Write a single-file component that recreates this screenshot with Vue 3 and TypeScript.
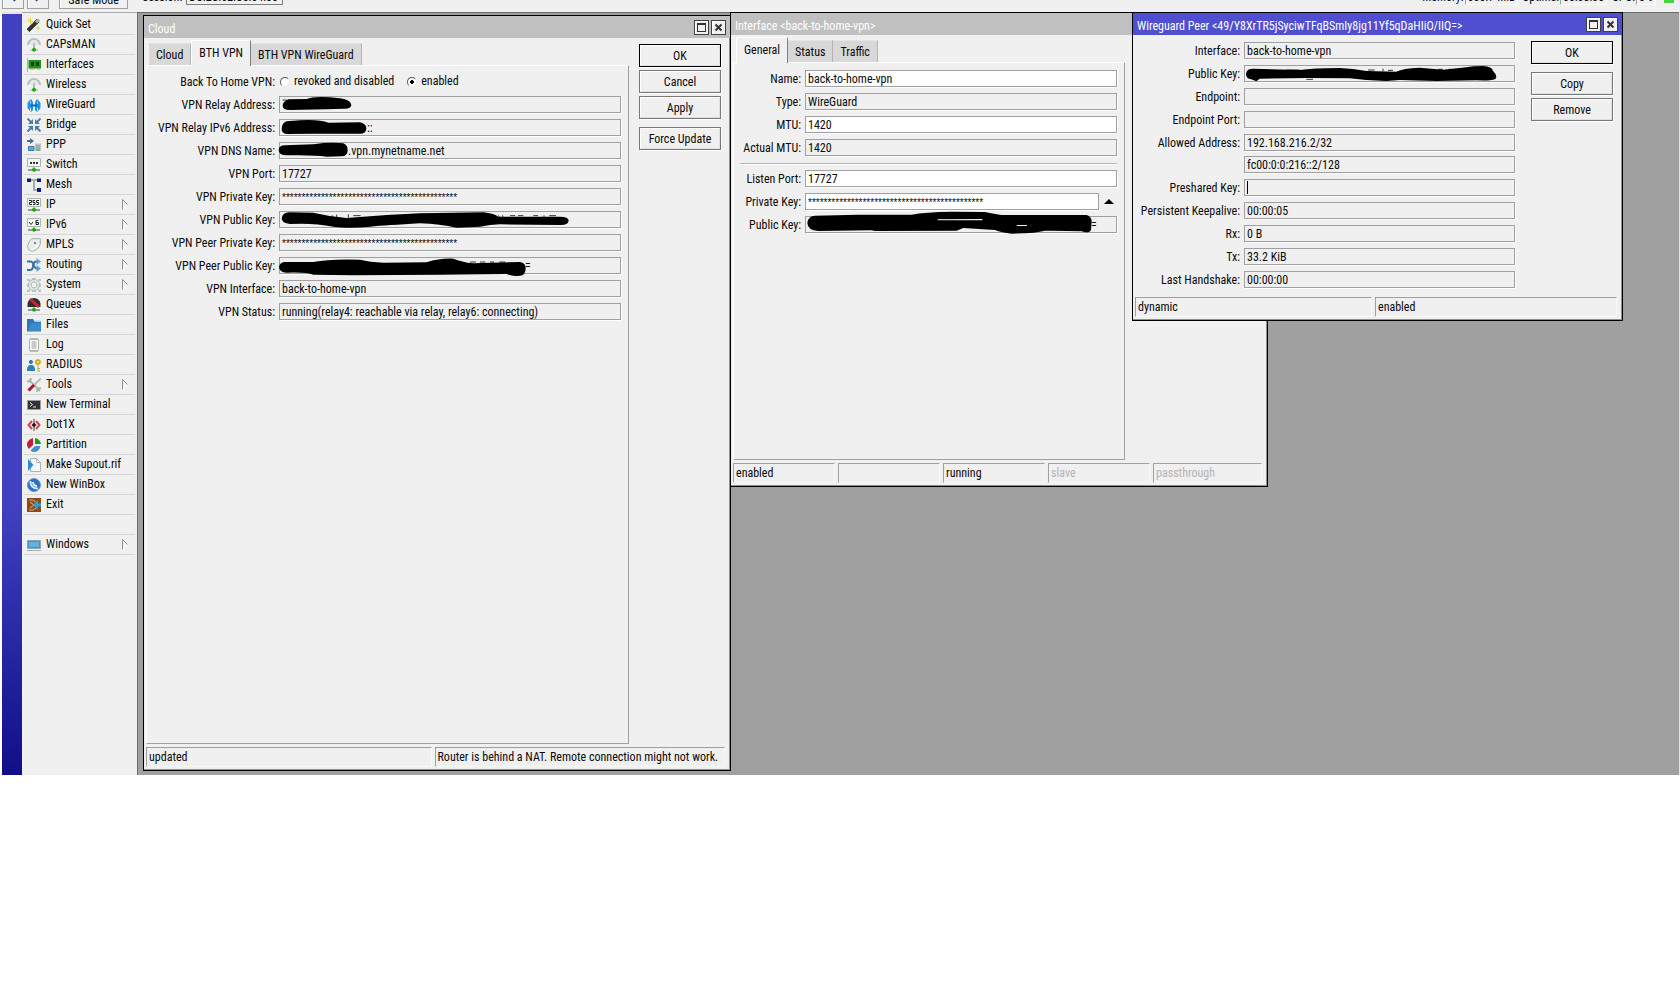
<script setup lang="ts">
import { ref } from 'vue'

type Shape = { d: string; f?: string; s?: string; w?: number }
interface MenuItem { name: string; icon: Shape[]; sub?: boolean }
interface Mask { x: number; y: number; w: number; d: string; marks?: string }
interface Field { id: string; label: string; values: string[]; edit?: boolean; secret?: boolean; mask?: Mask; caret?: boolean; toggle?: boolean; rule?: boolean }

const node: Shape[] = [
  { d: 'M1 12H13', s: '#3a4a3a', w: 1 },
  { d: 'M7 9V12', s: '#8a9a98', w: 1 },
  { d: 'M5 11L7 9.5L9 11V12.500L7 14L5 12.500Z', f: '#1fa80c' },
]
const arc: Shape[] = [
  { d: 'M1 7A6 6 0 0 1 13 7', s: '#b4bfbd', w: 2 },
  { d: 'M3.500 7A3.500 3.500 0 0 1 10.500 7', s: '#dfe6e5', w: 2 },
  { d: 'M7 5V11', s: '#7c8a88', w: 1 },
  { d: 'M3 12H11', s: '#a9b4b2', w: 1 },
  { d: 'M5 11L7 9.500L9 11V12.500L7 14L5 12.500Z', f: '#1fa80c' },
]
const card: Shape[] = [{ d: 'M0.500 0.500H13.500V8.500H0.500Z', f: '#f7f9f9', s: '#aab4b2', w: 1 }]

const menu: MenuItem[] = [
  { name: 'Quick Set', icon: [
    { d: 'M1 12.500L11 2.500', s: '#30302f', w: 4 },
    { d: 'M9 4.500L12 1.500', s: '#a9adad', w: 3 },
    { d: 'M3.500 0V6M0.500 3H6.500M1 0.800L6 5.500M11 8V12M9 10H13', s: '#e8dc2a', w: 1 },
  ] },
  { name: 'CAPsMAN', icon: arc },
  { name: 'Interfaces', icon: [
    { d: 'M0.500 0V14', s: '#a5b1ae', w: 1 },
    { d: 'M1.500 2H14V10.500H1.500Z', f: '#1d9312' },
    { d: 'M4 4H7V8H4ZM9 4H12V8H9Z', f: '#173b17' },
    { d: 'M3 11H8M10 11H13', s: '#c09a40', w: 1 },
  ] },
  { name: 'Wireless', icon: arc },
  { name: 'WireGuard', icon: [
    { d: 'M4 1L6 4V12L4 14L2 12L0.500 10V5L2 3Z', f: '#1d93e4' },
    { d: 'M10 1L8 4V12L10 14L12 12L13.500 10V5L12 3Z', f: '#1d93e4' },
    { d: 'M4 7.500H10', s: '#0b62ae', w: 2 },
    { d: 'M3.500 3V6M10.500 3V6', s: '#7fd0ff', w: 1 },
    { d: 'M3.500 10V13M10.500 10V13', s: '#f0f0f0', w: 1 },
  ] },
  { name: 'Bridge', icon: [
    { d: 'M0.500 0.500L4.500 4.500M13.500 0.500L9.500 4.500M0.500 13.500L4.500 9.500M13.500 13.500L9.500 9.500', s: '#4f7ca3', w: 2 },
    { d: 'M6 1V6H1ZM8 1V6H13ZM6 13V8H1ZM8 13V8H13Z', f: '#4f7ca3' },
  ] },
  { name: 'PPP', icon: [
    { d: 'M0 3H4', s: '#42719a', w: 2 },
    { d: 'M3 0L7 3L3 6Z', f: '#42719a' },
    { d: 'M1.500 8.500H7V12.500H1.500Z', f: '#5ca8e0', s: '#3d78a8', w: 1 },
    { d: 'M8 5.500H14V13H8Z', f: '#bcc5c3' },
    { d: 'M9 8H13M9 10H13', s: '#8a9694', w: 1 },
    { d: 'M9 12H13', s: '#33b020', w: 1 },
  ] },
  { name: 'Switch', icon: [...card, { d: 'M3 4H5V6H3ZM6 4H8V6H6ZM9 4H11V6H9Z', f: '#333' }, ...node] },
  { name: 'Mesh', icon: [
    { d: 'M2 2H12M7 2V12H12', s: '#9fb0ae', w: 2 },
    { d: 'M0 0.500H4V4H0ZM10 0.500H14V4H10ZM10 10H14V14H10Z', f: '#101a80' },
  ] },
  { name: 'IP', sub: true, icon: [...card, { d: 'M2 2.500H4.500V4.500H2.500V6.500H5M8 2.500H6V4.500H8V6.500H6M12 2.500H9.500V4.500H11.500V6.500H9.500', s: '#222', w: 1 }, ...node] },
  { name: 'IPv6', sub: true, icon: [...card, { d: 'M2 4L4 6.500L6 4M11.500 2.500H9V6.500H11.500V4.500H9', s: '#222', w: 1 }, ...node] },
  { name: 'MPLS', sub: true, icon: [
    { d: 'M5 0.700H13.300V6Q13 9 9 12Q5 14.500 2 12Q-1 9 2 4Q3 2 5 0.700Z', f: '#e9eeed', s: '#a7b1af', w: 1 },
    { d: 'M3 12Q8 12 12 6', s: '#fff', w: 1 },
    { d: 'M7 4H9V6H7Z', f: '#7c8886' },
  ] },
  { name: 'Routing', sub: true, icon: [
    { d: 'M0 12H3Q6 12 6 8Q6 3.500 10 3.500', s: '#3f739e', w: 2 },
    { d: 'M0 3.500H3Q6 3.500 7 7.500Q8 10.500 10 10.500', s: '#3f739e', w: 2 },
    { d: 'M9.500 0L14 3.500L9.500 7ZM9.500 7L14 10.500L9.500 14Z', f: '#5fa5dd' },
  ] },
  { name: 'System', sub: true, icon: [
    { d: 'M0 1H3V3H0ZM5 0H9V2H5ZM11 1H14V3H11ZM0 5.500H2V9H0ZM12 5.500H14V9H12ZM0 11.500H3V14H0ZM5 12.500H9V14H5ZM11 11.500H14V14H11Z', f: '#bcc6c4' },
    { d: 'M7 1.500A5.500 5.500 0 1 1 6.900 1.500Z', f: '#e4e9e8', s: '#b0bab8', w: 1 },
    { d: 'M7 4A3 3 0 1 1 6.900 4Z', f: '#f5f5f5', s: '#a3aeac', w: 1 },
  ] },
  { name: 'Queues', icon: [
    { d: 'M0.500 9V6A6.500 6 0 0 1 13.500 6V9Z', f: '#302d2d' },
    { d: 'M3 1L12 9', s: '#cf2232', w: 3 }, ...node,
  ] },
  { name: 'Files', icon: [
    { d: 'M0 1H6L8 4H14V13.500H0Z', f: '#2b79b8' },
    { d: 'M1 13L4 5H14V13Z', f: '#398bca' },
    { d: 'M8 2.500H14V4H8Z', f: '#9fd0f2' },
  ] },
  { name: 'Log', icon: [
    { d: 'M2.500 1.500H11.500V12.500H2.500Z', f: '#fff', s: '#a7b2af', w: 1 },
    { d: 'M3 0.500H11M3 13.500H11', s: '#b7c0be', w: 1 },
    { d: 'M4.500 4H9.500M4.500 6H9.500M4.500 8H9.500M4.500 10H9.500', s: '#8c9996', w: 1 },
  ] },
  { name: 'RADIUS', icon: [
    { d: 'M4 2A2 2 0 1 1 3.900 2Z', f: '#2578b4' },
    { d: 'M0 12Q0 7 4 7Q8 7 8 12V13H0Z', f: '#2c80bd' },
    { d: 'M11 2A2 2 0 1 1 10.900 2Z', s: '#c5b116', w: 2 },
    { d: 'M11 6V13.500M11 10.500H13M11 13H13', s: '#c5b116', w: 1 },
  ] },
  { name: 'Tools', sub: true, icon: [
    { d: 'M2 2L13 13', s: '#a9b6b3', w: 2 },
    { d: 'M0 3Q3 5 4 0M10 14Q10 10 14 10', s: '#a9b6b3', w: 2 },
    { d: 'M14 0.500L7 7', s: '#aebab7', w: 2 },
    { d: 'M7 7L1.500 12.500', s: '#b01428', w: 3 },
  ] },
  { name: 'New Terminal', icon: [
    { d: 'M0.500 2.500H13.500V11.500H0.500Z', f: '#333', s: '#9b9f9f', w: 1 },
    { d: 'M3 4.500L5.500 6.500L3 8.500M6 9H9', s: '#eee', w: 1 },
  ] },
  { name: 'Dot1X', icon: [
    { d: 'M5 3L1.500 7L5 11M9 3L12.500 7L9 11', s: '#cf4753', w: 2 },
    { d: 'M7 1V13', s: '#444', w: 1 },
    { d: 'M7 4.500L9.500 7L7 9.500L4.500 7Z', f: '#222' },
  ] },
  { name: 'Partition', icon: [
    { d: 'M6 0V7L2 11Q-1 8 0.500 4Q2 1 6 0Z', f: '#c02231' },
    { d: 'M8 0Q13 1 14 6H8Z', f: '#1f9a1c' },
    { d: 'M13.500 8Q12 14 7 14Q5 14 3.500 12.500L8 8Z', f: '#3f90cc' },
  ] },
  { name: 'Make Supout.rif', icon: [
    { d: 'M3.500 0.500H9.500L13.500 4.500V13.500H3.500Z', f: '#f5f8f8', s: '#a8b6b3', w: 1 },
    { d: 'M9.500 0.500V4.500H13.500', s: '#a8b6b3', w: 1 },
    { d: 'M1 1L6.500 7L1 13Z', f: '#2c8ed0' },
  ] },
  { name: 'New WinBox', icon: [
    { d: 'M7 0.500A6.500 6.500 0 1 1 6.900 0.500Z', f: '#2c6fc0', s: '#6f9bc6', w: 1 },
    { d: 'M3.500 3Q3 10.500 11 10.500M6 4Q6 8 10 8', s: '#d4e8fa', w: 2 },
  ] },
  { name: 'Exit', icon: [
    { d: 'M0 0H14V14H0Z', f: '#8a4a1c' },
    { d: 'M2 2H6L9 4M2 12H6L9 10', s: '#dba86c', w: 1 },
    { d: 'M3 4L7 7L3 10', s: '#f0c48c', w: 1 },
    { d: 'M11 2V12L6 7Z', f: '#2d9be0' },
    { d: 'M11 7H14', s: '#2d9be0', w: 3 },
  ] },
]
const windowsItem: MenuItem = { name: 'Windows', sub: true, icon: [
  { d: 'M0.500 2.500H13.500V10.500H0.500Z', f: '#3f94d2', s: '#97a3a8', w: 1 },
  { d: 'M2 4H12V9H2Z', f: '#62b0e6' },
  { d: 'M0 12.500H14', s: '#a9afb2', w: 1 },
] }

const stars = '*'.repeat(45)

const cloudFields: Field[] = [
  { id: 'relay', label: 'VPN Relay Address:', values: [''], mask: { x: 417, y: 288, w: 73, d: 'M428 318Q428 304 445 298L500 297Q520 288 570 292L600 295Q634 300 634 315Q632 328 610 326L560 328L450 330Q428 330 428 318Z', marks: 'M428 300H440' } },
  { id: 'relay6', label: 'VPN Relay IPv6 Address:', values: ['::'], mask: { x: 417, y: 357, w: 88, d: 'M425 388Q425 368 440 364L480 361Q540 358 565 368L660 367Q680 372 679 386Q678 401 660 401L520 401L440 402Q425 400 425 388Z' } },
  { id: 'dns', label: 'VPN DNS Name:', values: ['.vpn.mynetname.net'], mask: { x: 417, y: 426, w: 69, d: 'M416 450Q416 436 435 436L520 433Q570 426 610 430Q624 436 623 452Q622 468 605 469L560 470Q520 464 440 466Q416 466 416 450Z' } },
  { id: 'port', label: 'VPN Port:', values: ['17727'] },
  { id: 'priv', label: 'VPN Private Key:', values: [stars], secret: true },
  { id: 'pub', label: 'VPN Public Key:', values: [''], mask: { x: 417, y: 633, w: 290, d: 'M425 655Q428 636 450 637L520 638Q570 650 620 654Q680 650 740 645L840 640L1030 637Q1060 640 1075 650L1260 650Q1286 650 1286 662Q1284 676 1260 675L1080 673Q1050 674 1020 680L950 683Q900 672 840 670Q740 676 690 680Q620 686 580 680Q520 668 450 672Q425 670 425 655Z', marks: 'M576 646L580 654M590 644V655M625 643V653M640 647H662M1075 646L1080 654M1088 646V652M1110 647H1126M1134 647H1150M1180 647H1194M1212 646V652M1228 647H1248' } },
  { id: 'ppriv', label: 'VPN Peer Private Key:', values: [stars], secret: true },
  { id: 'ppub', label: 'VPN Peer Public Key:', values: ['='], mask: { x: 417, y: 771, w: 246, d: 'M417 800Q420 784 440 786L520 786Q570 776 660 779Q690 786 730 788L860 787Q900 774 940 776Q965 786 1000 790L1140 786Q1157 790 1157 803Q1157 826 1140 827Q1115 830 1100 822L900 824L640 826L520 824Q500 816 440 818Q417 816 417 800Z', marks: 'M990 786H1008M1020 786H1036M1050 786H1062M1078 786H1096' } },
  { id: 'iface', label: 'VPN Interface:', values: ['back-to-home-vpn'] },
  { id: 'status', label: 'VPN Status:', values: ['running(relay4: reachable via relay, relay6: connecting)'] },
]
const ifaceFields: Field[] = [
  { id: 'name', label: 'Name:', values: ['back-to-home-vpn'], edit: true },
  { id: 'type', label: 'Type:', values: ['WireGuard'] },
  { id: 'mtu', label: 'MTU:', values: ['1420'], edit: true },
  { id: 'amtu', label: 'Actual MTU:', values: ['1420'] },
  { id: 'listen', label: 'Listen Port:', values: ['17727'], edit: true, rule: true },
  { id: 'ipriv', label: 'Private Key:', values: [stars], edit: true, secret: true, toggle: true },
  { id: 'ipub', label: 'Public Key:', values: ['='], mask: { x: 240, y: 648, w: 286, d: 'M247 668Q250 648 270 647L400 644L560 644Q600 636 680 635L780 636Q810 642 830 645L1085 645Q1100 650 1100 665L1098 690Q1095 698 1080 697L1070 694L980 692L960 692Q930 700 860 701Q830 698 810 690L715 684L695 692L450 693L440 691L280 693Q247 690 247 668Z M638 658V661H772V657Z M875 675V678H906V675Z' } },
]
const peerFields: Field[] = [
  { id: 'pif', label: 'Interface:', values: ['back-to-home-vpn'] },
  { id: 'ppk', label: 'Public Key:', values: [''], mask: { x: 373, y: 195, w: 254, d: 'M379 222Q380 206 400 206L540 210Q580 204 660 204Q700 206 740 213L830 215Q850 205 900 203L970 209L1040 202Q1060 198 1090 198Q1118 200 1120 213Q1134 226 1128 236Q1120 243 1070 241L950 243L840 240L800 243L740 240L690 235L560 234L420 236L410 244L395 238Q379 236 379 222Z', marks: 'M500 210H540M745 210H765M790 206V214M805 211H820M560 238H580M955 208H970M990 206V212' } },
  { id: 'ep', label: 'Endpoint:', values: [''] },
  { id: 'epp', label: 'Endpoint Port:', values: [''] },
  { id: 'allow', label: 'Allowed Address:', values: ['192.168.216.2/32', 'fc00:0:0:216::2/128'] },
  { id: 'psk', label: 'Preshared Key:', values: [''], caret: true },
  { id: 'keep', label: 'Persistent Keepalive:', values: ['00:00:05'] },
  { id: 'rx', label: 'Rx:', values: ['0 B'] },
  { id: 'tx', label: 'Tx:', values: ['33.2 KiB'] },
  { id: 'hand', label: 'Last Handshake:', values: ['00:00:00'] },
]

interface Win { key: string; title: string; active?: boolean; boxes?: boolean; tabs: string[]; tab: number; radios?: boolean; fields: Field[]; actions: string[][]; status: { t: string; dim?: boolean }[] }
const wins: Win[] = [
  { key: 'cloud', title: 'Cloud', boxes: true, tabs: ['Cloud', 'BTH VPN', 'BTH VPN WireGuard'], tab: 1, radios: true, fields: cloudFields,
    actions: [['OK', 'Cancel', 'Apply'], ['Force Update']],
    status: [{ t: 'updated' }, { t: 'Router is behind a NAT. Remote connection might not work.' }] },
  { key: 'iface', title: 'Interface <back-to-home-vpn>', tabs: ['General', 'Status', 'Traffic'], tab: 0, fields: ifaceFields, actions: [],
    status: [{ t: 'enabled' }, { t: '' }, { t: 'running' }, { t: 'slave', dim: true }, { t: 'passthrough', dim: true }] },
  { key: 'peer', title: 'Wireguard Peer <49/Y8XrTR5jSyciwTFqBSmIy8jg11Yf5qDaHIiO/IIQ=>', active: true, boxes: true, tabs: [], tab: 0, fields: peerFields,
    actions: [['OK'], ['Copy', 'Remove']],
    status: [{ t: 'dynamic' }, { t: 'enabled' }] },
]
const vpn = ref('enabled')
</script>

<template>
  <div class="app">
    <header class="topbar">
      <button class="tool small" aria-label="Undo"><svg viewBox="0 0 20 20"><path d="M8 8Q14 9 11 14" /></svg></button>
      <button class="tool small" aria-label="Redo"><svg viewBox="0 0 20 20"><path d="M12 8Q6 9 9 14" /></svg></button>
      <button class="tool safe">Safe Mode</button>
      <label class="session">Session: <input readonly value="DC:2C:6E:C0:04:00" /></label>
      <span class="grow"></span>
      <span class="stat">Memory:<output class="mem">600.7 MiB</output></span>
      <span class="stat">Uptime:<output class="up">00:38:30</output></span>
      <span class="stat">CPU:<output class="cpu">0%</output></span>
      <span class="led"></span>
    </header>

    <div class="main">
      <div class="strip"></div>
      <nav class="menu">
        <template v-for="m in [...menu, null, windowsItem]" :key="m ? m.name : 'gap'">
          <button v-if="m" class="item">
            <svg class="icon" viewBox="0 0 14 14">
              <path v-for="(p, i) in m.icon" :key="i" :d="p.d" :fill="p.f || 'none'" :stroke="p.s || 'none'" :stroke-width="p.w || 0" />
            </svg>
            <span>{{ m.name }}</span>
            <svg v-if="m.sub" class="sub" viewBox="0 0 6 11">
              <path d="M1 10.500L5.500 5.500" stroke="#fff" />
              <path d="M0.500 10.500V0.500L5.500 5.500" stroke="#909090" />
            </svg>
          </button>
          <div v-else class="item"></div>
        </template>
      </nav>

      <main class="desktop">
        <section v-for="w in wins" :key="w.key" class="win" :class="[w.key, { active: w.active }]">
          <header class="title">
            <span>{{ w.title }}</span>
            <template v-if="w.boxes">
              <button class="box" aria-label="Maximize"><svg viewBox="0 0 13 13"><path d="M2 2H11V11H2ZM3 4V10H10V4Z" fill="#333" fill-rule="evenodd" /></svg></button>
              <button class="box" aria-label="Close"><svg viewBox="0 0 13 13"><path d="M3.500 3.500L9.500 9.500M9.500 3.500L3.500 9.500" stroke="#333" stroke-width="2" /></svg></button>
            </template>
          </header>
          <div class="body">
            <div class="left">
              <div v-if="w.tabs.length" class="tabs" role="tablist">
                <button v-for="(t, i) in w.tabs" :key="t" role="tab" class="tab" :class="{ on: i === w.tab }" :aria-selected="i === w.tab">{{ t }}</button>
              </div>
              <form class="form" :class="{ panel: w.tabs.length }" @submit.prevent>
                <div v-if="w.radios" class="row">
                  <span class="label">Back To Home VPN:</span>
                  <div class="radios">
                    <label><input v-model="vpn" type="radio" name="vpn" value="revoked" />revoked and disabled</label>
                    <label><input v-model="vpn" type="radio" name="vpn" value="enabled" />enabled</label>
                  </div>
                </div>
                <template v-for="f in w.fields" :key="f.id">
                  <hr v-if="f.rule" />
                  <div class="row">
                    <label class="label" :for="f.id">{{ f.label }}</label>
                    <div class="stack">
                      <div v-for="(v, i) in f.values" :key="i" class="line">
                        <div class="field" :class="{ edit: f.edit, secret: f.secret }">
                          <svg v-if="f.mask" class="mask" :width="f.mask.w" height="17" :viewBox="`${f.mask.x} ${f.mask.y} ${f.mask.w * 3} 51`">
                            <path v-if="f.mask.marks" :d="f.mask.marks" stroke="#333" stroke-width="3" />
                            <path :d="f.mask.d" fill="#000" fill-rule="evenodd" />
                          </svg>
                          <span v-if="f.caret" class="caret"></span>
                          <input :id="i ? f.id + i : f.id" :aria-label="i ? f.label : undefined" :readonly="!f.edit" :value="v" :class="{ tail: f.mask }" />
                        </div>
                        <button v-if="f.toggle" class="toggle" aria-label="Collapse"><svg viewBox="0 0 10 5"><path d="M0 5L5 0L10 5Z" /></svg></button>
                      </div>
                    </div>
                  </div>
                </template>
              </form>
            </div>
            <aside class="actions">
              <div v-for="(g, i) in w.actions" :key="i" class="group">
                <button v-for="a in g" :key="a" class="btn" :class="{ ok: a === 'OK' }">{{ a }}</button>
              </div>
            </aside>
          </div>
          <footer class="status">
            <span v-for="(s, i) in w.status" :key="i" :class="{ dim: s.dim }">{{ s.t }}</span>
          </footer>
        </section>
      </main>
    </div>
  </div>
</template>

<style>
body { background: #fff; }
</style>
<style scoped>
* { box-sizing: border-box; }
.app, .app button, .app input { font: 12px/15px 'Roboto Condensed', Roboto, 'Liberation Sans', sans-serif; color: #0a0a0a; }
.app { display: flex; flex-direction: column; height: 78vh; overflow: hidden; background: #f0f0f0; }
button { padding: 0; margin: 0; background: #f0f0f0; border: 0; border-radius: 0; }
path { fill-rule: evenodd; }

.topbar { display: flex; align-items: flex-end; height: 12px; flex: none; overflow: hidden; padding: 0 6px 0 2px; white-space: nowrap; }
.tool { height: 24px; border: 1px solid #a0a0a0; box-shadow: inset 1px 1px #fff; margin-bottom: 3px; flex: none; }
.small { width: 22px; margin-right: 3px; }
.small svg { width: 20px; height: 20px; display: block; fill: none; stroke: #223a8c; stroke-width: 2; }
.safe { width: 69px; margin-left: 7px; padding-top: 7px; }
.session { display: flex; align-items: flex-end; margin: 0 0 7px 14px; gap: 4px; height: 18px; }
.app .session input { width: 97px; height: 18px; border: 1px solid #808080; background: #f0f0f0; padding: 1px 2px 0; }
.grow { flex: 1; }
.stat { display: flex; align-items: flex-end; height: 18px; margin: 0 5px 7px 0; }
.stat output { height: 18px; border-left: 1px solid #a0a0a0; border-bottom: 1px solid #fff; border-right: 1px solid #fff; padding: 3px 0 0 2px; margin-left: 1px; }
.mem { width: 53px; }
.up { width: 47px; }
.cpu { width: 20px; }
.led { width: 10px; height: 12px; margin: 0 0 9px 3px; background: #44d83c; }

.main { display: flex; flex: 1; min-height: 0; }
.strip { width: 22px; border-top: 2px solid #e4e4e4; border-left: 2px solid #fff; background: linear-gradient(#4040c0 0, #4040c0 65%, #100f88 100%); }
.menu { display: flex; flex-direction: column; width: 115px; padding: 2px 2px 0 2px; border-top: 1px solid #a8a8a8; }
.item { display: flex; align-items: center; height: 20px; padding: 0 7px 0 3px; border-bottom: 1px solid #d6d6d6; text-align: left; white-space: nowrap; }
.icon { width: 14px; height: 14px; margin-right: 5px; flex: none; }
.item span { flex: 1; }
.sub { width: 6px; height: 11px; fill: none; }

.desktop { position: relative; flex: 1; background: #a0a0a0; box-shadow: inset 1px 1px #6c6c6c; border-right: 1px solid #e3e3e3; }
.win { position: absolute; display: flex; flex-direction: column; border: 1px solid #000; background: #f0f0f0; box-shadow: inset -1px -1px #909090; }
.cloud { left: 6px; top: 3px; width: 588px; height: 756px; }
.iface { left: 593px; top: 0; width: 538px; height: 475px; }
.peer { left: 995px; top: 0; width: 491px; height: 309px; }
.title { display: flex; align-items: center; gap: 2px; height: 22px; padding: 0 4px; background: #c0c0c0; color: #fff; white-space: nowrap; }
.title span { flex: 1; padding-top: 4px; }
.active .title { background: #4f4fcf; }
.box { width: 15px; height: 15px; border: 1px solid #404040; box-shadow: inset 1px 1px #fff; }
.box svg { display: block; width: 13px; height: 13px; }

.body { display: flex; flex: 1; min-height: 0; }
.left { display: flex; flex-direction: column; flex: 1; padding-left: 2px; }
.tabs { display: flex; align-items: flex-end; height: 27px; padding-left: 3px; }
.tab { height: 22px; padding: 1px 7px 0; background: #d8d8d8; border-right: 1px solid #b4b4b4; border-top: 1px solid #e4e4e4; }
.tab.on { position: relative; height: 26px; margin-bottom: -1px; padding: 0 7px 1px; background: #f0f0f0; border: solid #fff; border-width: 1px 1px 0; border-right-color: #808080; }
.form { display: flex; flex-direction: column; gap: 6px; flex: 1; padding: 7px 6px 0 0; }
.panel { padding: 7px 7px 0 0; border: 1px solid; border-color: #fff #a0a0a0 #a0a0a0 #fff; }
.peer .left { padding-left: 0; }
.row { display: flex; align-items: flex-start; }
.label { width: 132px; padding-right: 4px; text-align: right; height: 17px; line-height: 19px; white-space: nowrap; flex: none; }
.iface .label { width: 71px; }
.peer .label { width: 111px; }
.radios { display: flex; gap: 12px; }
.radios label { display: flex; align-items: center; gap: 4px; height: 17px; line-height: 19px; }
.radios input { appearance: none; width: 10px; height: 10px; margin: 0 0 0 1px; border: 1px solid; border-color: #555 #e8e8e8 #e8e8e8 #555; border-radius: 50%; background: #fff; }
.radios input:checked { background: radial-gradient(#000 0 2px, #fff 2px); }
.stack { display: flex; flex-direction: column; gap: 5px; flex: 1; min-width: 0; }
.line { display: flex; }
.field { display: flex; align-items: center; flex: 1; min-width: 0; height: 17px; border: 1px solid #a0a0a0; box-shadow: 1px 1px #fff; background: #f0f0f0; }
.field.edit { background: #fff; }
.field input { flex: 1; min-width: 0; width: 0; height: 15px; border: 0; padding: 1px 2px 0; outline: 0; background: transparent; }
.field input.tail { padding: 1px 0 0; }
.app .secret input { font: 10px/15px 'Liberation Sans', Arial, sans-serif; }
.mask { flex: none; overflow: visible; margin-left: -1px; }
.caret { width: 1px; height: 13px; margin-left: 2px; background: #000; }
.toggle { width: 18px; height: 17px; padding: 0 3px 0 5px; }
.toggle svg { display: block; width: 10px; height: 5px; }
hr { margin: 1px 0 0 6px; border: 0; border-top: 1px solid #b4b4b4; box-shadow: 0 1px #fff; }

.actions { width: 101px; padding: 6px 9px 0 10px; flex: none; }
.iface .actions { width: 142px; }
.group { display: flex; flex-direction: column; gap: 3px; margin-bottom: 8px; }
.btn { height: 23px; padding-top: 1px; border: 1px solid #787878; box-shadow: inset 1px 1px #fff, inset -1px -1px #e0e0e0, 1px 1px #fff; }
.btn.ok { border-color: #000; }
.status { display: grid; grid-template-columns: calc(50% - 4px) 1fr; gap: 3px; height: 26px; padding: 3px 5px 3px 2px; }
.iface .status { grid-template-columns: repeat(4, 102px) 1fr; }
.status span { padding: 2px 0 0 2px; border: 1px solid; border-color: #a0a0a0 #f8f8f8 #f8f8f8 #a0a0a0; white-space: nowrap; }
.status .dim { color: #b4b4b4; }
</style>
